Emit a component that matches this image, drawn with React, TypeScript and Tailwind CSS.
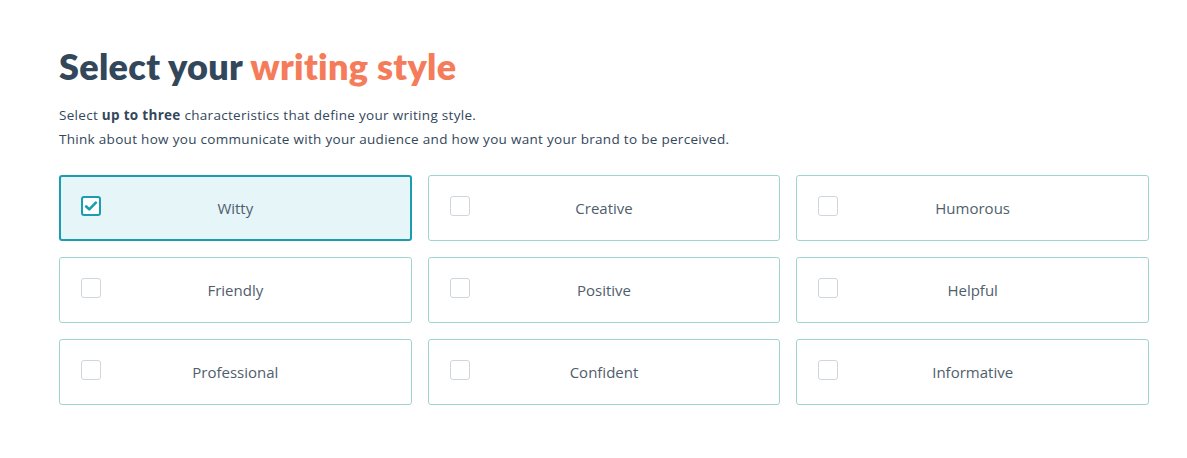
import { useState } from "react";

const styles = [
  "Witty",
  "Creative",
  "Humorous",
  "Friendly",
  "Positive",
  "Helpful",
  "Professional",
  "Confident",
  "Informative",
];

function Checkbox({ checked }: { checked: boolean }) {
  if (checked) {
    return (
      <span className="flex h-[20px] w-[20px] items-center justify-center rounded-[3px] border-2 border-[#1b9db0] bg-white">
        <svg viewBox="0 0 16 16" className="h-[14px] w-[14px]">
          <path
            d="M2.5 8.5l3.5 3.3 7.5-7.6"
            fill="none"
            stroke="#1b9db0"
            strokeWidth="3"
            strokeLinecap="round"
            strokeLinejoin="round"
          />
        </svg>
      </span>
    );
  }
  return <span className="block h-[20px] w-[20px] rounded-[3px] border-[1.5px] border-[#cfd6dc] bg-white" />;
}

export default function App() {
  const [selected, setSelected] = useState<string[]>(["Witty"]);

  const toggle = (name: string) => {
    setSelected((prev) =>
      prev.includes(name)
        ? prev.filter((s) => s !== name)
        : prev.length < 3
        ? [...prev, name]
        : prev
    );
  };

  return (
    <div className="min-h-[458px] w-full bg-white pl-[59px] pr-[38px] pt-[44px] font-['Open_Sans',sans-serif] text-[#33475b]">
      <h1 className="font-['Lato',sans-serif] text-[36px] font-extrabold leading-[44px] tracking-[0.3px]">
        Select your <span className="text-[#f57c5a]">writing style</span>
      </h1>

      <div className="mt-[15px] text-[13.5px] leading-[24px] tracking-[0.3px] text-[#33475b]">
        <p>
          Select <b className="font-bold">up to three</b> characteristics that define your writing style.
        </p>
        <p>Think about how you communicate with your audience and how you want your brand to be perceived.</p>
      </div>

      <div className="mt-[24px] grid grid-cols-3 gap-x-[16px] gap-y-[16px]">
        {styles.map((name) => {
          const isOn = selected.includes(name);
          return (
            <button
              key={name}
              onClick={() => toggle(name)}
              className={
                "relative flex h-[66px] items-center justify-center rounded-[3px] text-[15px] " +
                (isOn
                  ? "border-2 border-[#1b9db0] bg-[#e5f5f8]"
                  : "border border-[#9ed6cf] bg-white")
              }
            >
              <span className={"absolute " + (isOn ? "left-[20px] top-[19px]" : "left-[21px] top-[20px]")}>
                <Checkbox checked={isOn} />
              </span>
              <span className="text-[#4f5e6c]">{name}</span>
            </button>
          );
        })}
      </div>
    </div>
  );
}
